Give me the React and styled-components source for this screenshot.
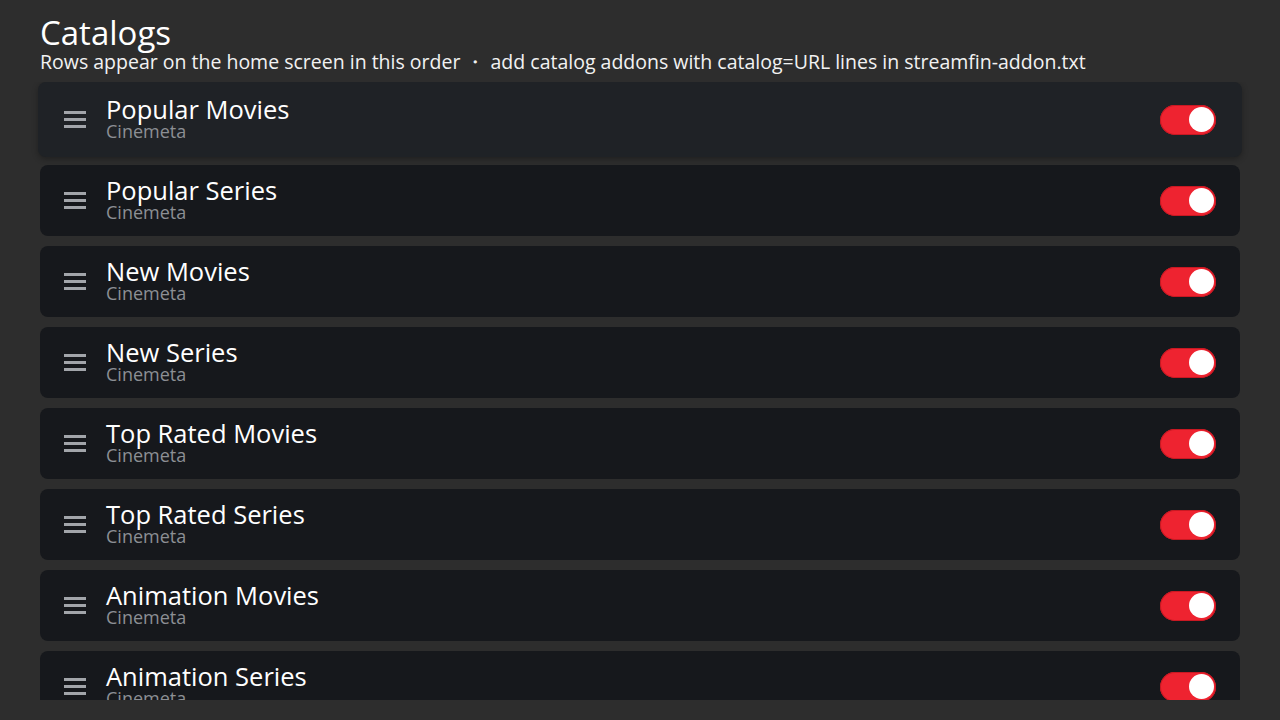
import React from "react";
import styled, { createGlobalStyle } from "styled-components";

const Global = createGlobalStyle`
  html, body { margin: 0; padding: 0; background: #2d2d2d; }
  body { font-family: "Open Sans", "Noto Sans", sans-serif; color: #fff; }
`;

const Page = styled.div`
  width: 1280px;
  height: 720px;
  overflow: hidden;
  display: flex;
  flex-direction: column;
  background: #2d2d2d;
`;

const Header = styled.header`
  padding: 14px 40px 0;
  height: 82px;
  flex-shrink: 0;
  box-sizing: border-box;
  display: flex;
  flex-direction: column;
`;

const Title = styled.h1`
  margin: 0;
  font-size: 33px;
  font-weight: 400;
  line-height: 38px;
`;

const Subtitle = styled.p`
  margin: 0;
  font-size: 19.5px;
  line-height: 20px;
  color: #f2f2f2;
  white-space: nowrap;
`;

const ListViewport = styled.div`
  height: 618px;
  flex-shrink: 0;
  overflow: hidden;
  padding: 2px 40px 0;
  box-sizing: border-box;
`;

const List = styled.ul`
  list-style: none;
  margin: 0;
  padding: 0;
  display: flex;
  flex-direction: column;
  gap: 10px;
`;

const Row = styled.li`
  height: ${(p) => (p.$focused ? 75 : 71)}px;
  flex-shrink: 0;
  margin: ${(p) => (p.$focused ? "-2px -2px" : "0")};
  padding: 0 ${(p) => (p.$focused ? 26 : 24)}px;
  box-sizing: border-box;
  border-radius: 8px;
  background: ${(p) => (p.$focused ? "#1f2226" : "#16181c")};
  box-shadow: ${(p) => (p.$focused ? "0 2px 6px rgba(0,0,0,0.3)" : "none")};
  display: flex;
  align-items: center;
  gap: 20px;
`;

const Handle = styled.div`
  width: 22px;
  display: flex;
  flex-direction: column;
  gap: 4px;
  span {
    display: block;
    height: 3px;
    background: #a2a5aa;
  }
`;

const Texts = styled.div`
  flex: 1;
  display: flex;
  flex-direction: column;
  padding-bottom: 4px;
`;

const Name = styled.div`
  font-size: 25.5px;
  line-height: 26px;
  color: #fff;
  white-space: nowrap;
`;

const Source = styled.div`
  font-size: 18px;
  line-height: 18px;
  color: #8c8f94;
  white-space: nowrap;
`;

const Toggle = styled.div`
  width: 56px;
  height: 30px;
  border-radius: 15px;
  background: #ee2330;
  box-shadow: inset 0 0 0 1px #c81822;
  display: flex;
  align-items: center;
  justify-content: flex-end;
  padding: 0 2px;
  box-sizing: border-box;
  &::after {
    content: "";
    width: 25px;
    height: 25px;
    border-radius: 50%;
    background: #fff;
  }
`;

const catalogs = [
  "Popular Movies",
  "Popular Series",
  "New Movies",
  "New Series",
  "Top Rated Movies",
  "Top Rated Series",
  "Animation Movies",
  "Animation Series",
];

export default function App() {
  return (
    <Page>
      <Global />
      <Header>
        <Title>Catalogs</Title>
        <Subtitle>
          Rows appear on the home screen in this order ・ add catalog addons with catalog=URL lines in streamfin-addon.txt
        </Subtitle>
      </Header>
      <ListViewport>
        <List>
          {catalogs.map((name, i) => (
            <Row key={name} $focused={i === 0}>
              <Handle>
                <span />
                <span />
                <span />
              </Handle>
              <Texts>
                <Name>{name}</Name>
                <Source>Cinemeta</Source>
              </Texts>
              <Toggle />
            </Row>
          ))}
        </List>
      </ListViewport>
    </Page>
  );
}
